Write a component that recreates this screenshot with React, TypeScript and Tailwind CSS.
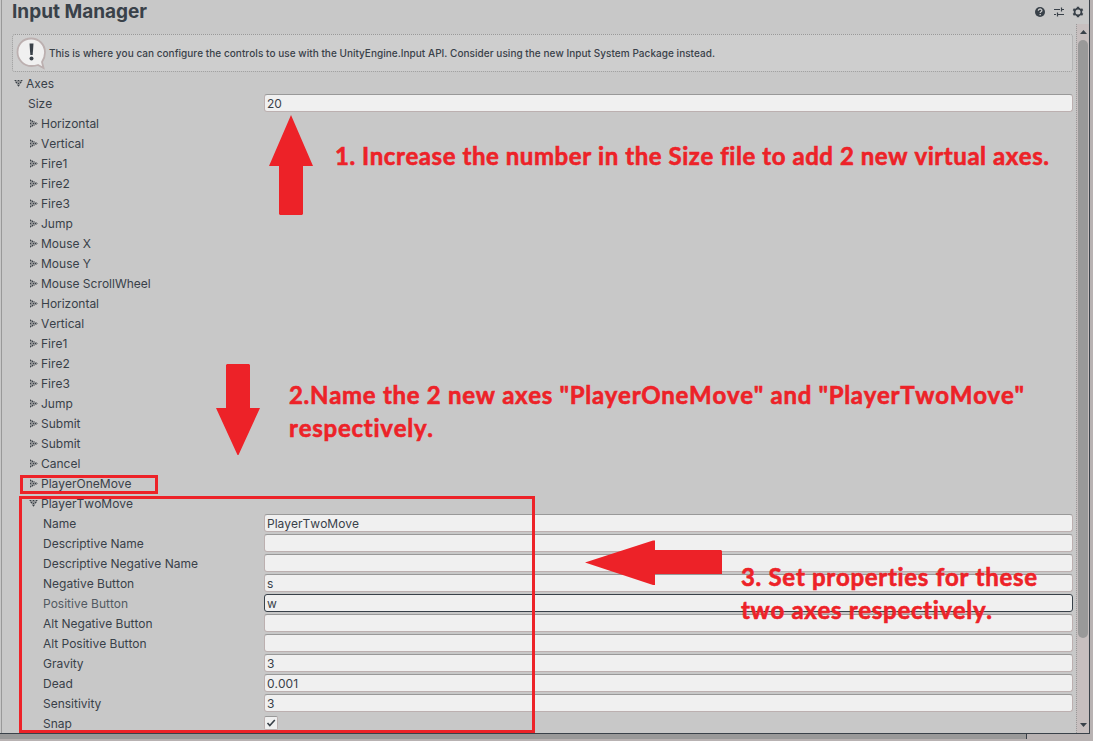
import React from "react";

type Row = { label: string; kind: "closed" | "open" | "field" | "check"; indent: string; value?: string; active?: boolean };

const axis = (label: string): Row => ({ label, kind: "closed", indent: "pl-[41px]" });
const field = (label: string, value = "", active = false): Row => ({ label, kind: "field", indent: "pl-[43px]", value, active });

const rows: Row[] = [
  { label: "Axes", kind: "open", indent: "pl-[26px]" },
  { label: "Size", kind: "field", indent: "pl-[28px]", value: "20" },
  ...["Horizontal", "Vertical", "Fire1", "Fire2", "Fire3", "Jump", "Mouse X", "Mouse Y", "Mouse ScrollWheel",
    "Horizontal", "Vertical", "Fire1", "Fire2", "Fire3", "Jump", "Submit", "Submit", "Cancel", "PlayerOneMove"].map(axis),
  { label: "PlayerTwoMove", kind: "open", indent: "pl-[41px]" },
  field("Name", "PlayerTwoMove"),
  field("Descriptive Name"),
  field("Descriptive Negative Name"),
  field("Negative Button", "s"),
  field("Positive Button", "w", true),
  field("Alt Negative Button"),
  field("Alt Positive Button"),
  field("Gravity", "3"),
  field("Dead", "0.001"),
  field("Sensitivity", "3"),
  { label: "Snap", kind: "check", indent: "pl-[43px]" },
];

function Foldout({ open }: { open: boolean }) {
  return (
    <svg width="9" height="9" viewBox="0 0 9 9" className="absolute -left-[12px] top-[5px]" shapeRendering="crispEdges">
      {open ? <path d="M0 1h9L5 8H4z" fill="#8e9092" /> : <path d="M1 0v9l8-4V4z" fill="#8e9092" />}
      {open ? (
        <path d="M1 1h1v1H1zM4 1h1v1H4zM7 1h1v1H7zM2 3h1v1H2zM6 3h1v1H6zM4 4h1v1H4zM4 6h1v1H4z" fill="#394149" />
      ) : (
        <path d="M1 1h1v1H1zM1 4h1v1H1zM1 7h1v1H1zM3 2h1v1H3zM3 6h1v1H3zM4 4h1v1H4zM6 4h1v1H6z" fill="#394149" />
      )}
    </svg>
  );
}

function PropertyRow({ row }: { row: Row }) {
  return (
    <div className="flex h-5 shrink-0">
      <div className={`w-[262px] shrink-0 ${row.indent}`}>
        <span className={`relative inline-block whitespace-nowrap leading-5 ${row.active ? "text-[#525a62]" : ""}`}>
          {(row.kind === "open" || row.kind === "closed") && <Foldout open={row.kind === "open"} />}
          {row.label}
        </span>
      </div>
      {row.kind === "field" && (
        <div
          className={`ml-[2px] h-[18px] w-[809px] rounded-[3px] border bg-[#f0f0f0] pl-[2px] leading-[18px] ${
            row.active ? "border-[#394149]" : "border-[#bcb0b0] border-t-[#999999]"
          }`}
        >
          {row.value}
        </div>
      )}
      {row.kind === "check" && (
        <div className="ml-[2px] mt-[2px] h-[14px] w-[14px] rounded-[2px] border border-[#bcb0b0] border-t-[#999999] bg-[#f0f0f0]">
          <svg width="12" height="12" viewBox="0 0 12 12" fill="none">
            <path d="M2.5 6l2.3 2.5L9.8 3" stroke="#394149" strokeWidth="1.6" />
          </svg>
        </div>
      )}
    </div>
  );
}

function HeaderIcons() {
  return (
    <svg width="50" height="14" viewBox="0 0 50 14" className="absolute left-[1034px] top-[5px]">
      <circle cx="6" cy="7" r="5" fill="#394149" />
      <path d="M4.3 5.8c0-2.4 3.6-2.3 3.6-.2C7.9 6.8 6.2 6.8 6.2 8" fill="none" stroke="#c8c8c8" strokeWidth="1.3" />
      <path d="M5.5 9h1.4v1.3H5.500z" fill="#c8c8c8" />
      <path d="M20 4.5h6M28 4.5h2M20 9.5h2M24 9.5h6M27.5 2.5v4M23.5 7.5v4" stroke="#394149" strokeWidth="1.2" fill="none" />
      <circle cx="44" cy="7" r="3.4" fill="none" stroke="#394149" strokeWidth="1.8" />
      <path d="M44 1.800v1.800M44 10.400v1.800M39.300 4.300l1.700 1M47 8.700l1.700 1M39.300 9.700l1.700-1M47 5.300l1.700-1" stroke="#394149" strokeWidth="2.400" />
    </svg>
  );
}

function Scrollbar() {
  return (
    <div className="absolute left-[1076px] top-[24px] flex h-[709px] w-[13px] flex-col items-center border-l border-dotted border-[#999] bg-[#c7bfbf]">
      <svg width="7" height="4" viewBox="0 0 7 4" className="mt-[6px] shrink-0">
        <path d="M3.5 0L7 4H0z" fill="#394149" />
      </svg>
      <div className="mt-[6px] h-[598px] w-[10px] shrink-0 rounded-[5px] bg-[#999999]" />
      <svg width="7" height="4" viewBox="0 0 7 4" className="mt-[85px] shrink-0">
        <path d="M0 0h7L3.5 4z" fill="#394149" />
      </svg>
    </div>
  );
}

function Note({ text, x, y, w }: { text: string; x: number; y: number; w: number }) {
  return (
    <text x={x} y={y} textLength={w} lengthAdjust="spacing" fill="#ed2228" stroke="#ed2228" strokeWidth="0.6">
      {text}
    </text>
  );
}

function Annotations() {
  return (
    <svg width="1093" height="741" viewBox="0 0 1093 741" className="pointer-events-none absolute left-0 top-0 font-['Lato',sans-serif] text-[24px] font-bold [font-variant-ligatures:none]">
      <g fill="#ed2228">
        <path d="M291 115L313 166H303V214L302 215H280L279 214V166H269z" />
        <path d="M227 364H249L250 365V408H260L238.500 455H237.500L216 408H226V365z" />
        <path d="M585 562.500L653 540.500H655V550H721L722 551V574H655V585H653z" />
      </g>
      <g fill="none" stroke="#ed2228" strokeWidth="3">
        <path d="M21.500 476.500H156.500V492.500H21.500z" />
        <path d="M20.500 497.500H533.500V731.500H20.500z" />
      </g>
      <Note text="1. Increase the number in the Size file to add 2 new virtual axes." x={335} y={165} w={714} />
      <Note text={'2.Name the 2 new axes "PlayerOneMove" and "PlayerTwoMove"'} x={289} y={404} w={735} />
      <Note text="respectively." x={289} y={437} w={144} />
      <Note text="3. Set properties for these" x={741} y={586} w={296} />
      <Note text="two axes respectively." x={741} y={619} w={251} />
    </svg>
  );
}

export default function App() {
  return (
    <div className="relative flex h-[741px] w-[1093px] flex-col overflow-hidden bg-[#b8b2b2] font-['Inter',sans-serif] text-[12px] text-[#394149] [font-kerning:none]">
      <div className="flex h-[734px] w-[1090px] flex-col overflow-hidden border-b border-r border-[#394149] bg-[#c8c8c8]">
        <div className="ml-px flex h-full flex-col border-l border-[#999999]">
          <h1 className="ml-[10px] h-[34px] shrink-0 text-[19px] font-bold leading-[23px]">Input Manager</h1>
          <div className="ml-[10px] flex h-[38px] w-[1061px] shrink-0 items-center rounded-[3px] border border-dotted border-[#999999] bg-[#cecece]">
            <svg width="32" height="34" viewBox="0 0 32 34" className="ml-[2px] shrink-0">
              <path
                d="M16 2.500C8 2.500 2.500 8.500 2.500 16S8.500 30 16.500 30C19 30 21.500 29.500 23 29L28.500 32 27 26C29 23 30 20 30 16.500 30 8.500 24 2.500 16 2.500z"
                fill="#f0f0f0"
                stroke="#bcb0b0"
                strokeWidth="1.800"
              />
              <path d="M14.500 7.500h4l-.8 11.500h-2.400z" fill="#394149" />
              <circle cx="16.500" cy="22.500" r="2" fill="#394149" />
            </svg>
            <p className="ml-[2px] whitespace-nowrap text-[10px] font-medium tracking-[0.038px]">
              This is where you can configure the controls to use with the UnityEngine.Input API. Consider using the new Input System Package instead.
            </p>
          </div>
          <div className="-ml-[2px] mt-[2px] flex flex-col">
            {rows.map((row, i) => (
              <PropertyRow key={i} row={row} />
            ))}
          </div>
        </div>
      </div>
      <div className="flex h-[7px]">
        <div className="h-[5px] w-[1027px] border-r border-[#394149] bg-[#999999]" />
      </div>
      <HeaderIcons />
      <Scrollbar />
      <Annotations />
    </div>
  );
}
